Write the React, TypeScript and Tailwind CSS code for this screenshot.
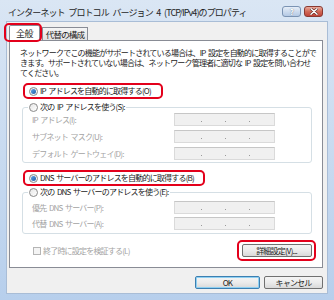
const FONT = "font-['Noto_Sans_CJK_JP','Noto_Sans',sans-serif]";

function Radio({ checked }: { checked?: boolean }) {
  return (
    <span className="w-[9px] h-[9px] shrink-0 rounded-full border border-[#8a8a8a] bg-gradient-to-br from-[#e6e6e6] to-[#ffffff] flex items-center justify-center">
      {checked && <span className="w-[5px] h-[5px] rounded-full bg-gradient-to-br from-[#5fa3e6] to-[#1f5ea8]" />}
    </span>
  );
}

function IpBox() {
  return (
    <div className="w-[101px] h-[13px] bg-[#f0f0f0] border border-[#dadada] border-t-[#c6c6c6] flex items-end pb-[3px] pl-[26px] gap-[23px]">
      <span className="w-px h-px bg-[#9a9a9a]" />
      <span className="w-px h-px bg-[#9a9a9a]" />
      <span className="w-px h-px bg-[#9a9a9a]" />
    </div>
  );
}

function Row({ label }: { label: string }) {
  return (
    <div className="flex items-center h-[13px]">
      <span className="w-[151px] pl-[9px] text-[#a3a3a3] whitespace-nowrap">{label}</span>
      <IpBox />
    </div>
  );
}

function Button({ children, primary, w }: { children: React.ReactNode; primary?: boolean; w: string }) {
  return (
    <div
      className={`${w} h-[13px] rounded-[2px] border flex items-center justify-center bg-gradient-to-b from-[#f4f4f4] via-[#ebebeb] to-[#d9d9d9] ${
        primary ? 'border-[#3c7fb1] shadow-[inset_0_0_0_1px_#8fd0f2]' : 'border-[#707070]'
      }`}
    >
      {children}
    </div>
  );
}

export default function App() {
  return (
    <div className={`w-[334px] h-[300px] overflow-hidden flex flex-col bg-gradient-to-b from-[#dae6f4] to-[#b7cfec] ${FONT} text-[8px] tracking-[-0.8px] [word-spacing:1.5px] text-[#1b1b1b]`}>
      {/* title bar */}
      <div className="h-[21px] shrink-0 flex items-center pl-[8px] pr-[11px] pt-[4px]">
        <span className="flex-1 text-[9px] tracking-[-0.9px] [word-spacing:2.5px] text-[#1e1e1e] whitespace-nowrap">
          インターネット プロトコル バージョン 4 (TCP/IPv4)のプロパティ
        </span>
        <div className="flex gap-[3px] -mt-[2px]">
          <div className="w-[19px] h-[11px] rounded-[3px] border border-[#7b93b3] bg-gradient-to-b from-[#e6eef8] to-[#b4c9e4] flex items-center justify-center text-[8px] font-bold text-white [text-shadow:0_0_1px_#44556a]">
            ?
          </div>
          <div className="w-[19px] h-[11px] rounded-[3px] border border-[#8a3a32] bg-gradient-to-b from-[#e9a99c] via-[#d16a58] to-[#c0443a] flex items-center justify-center">
            <svg width="8" height="7" viewBox="0 0 8 7">
              <path d="M1 0.8 L7 6.2 M7 0.8 L1 6.2" stroke="#5a2520" strokeWidth="2.6" strokeLinecap="round" />
              <path d="M1 0.8 L7 6.2 M7 0.8 L1 6.2" stroke="#ffffff" strokeWidth="1.5" strokeLinecap="round" />
            </svg>
          </div>
        </div>
      </div>

      {/* client */}
      <div className="mx-[6px] mb-[6px] h-[273px] bg-[#f0f0f0] border border-[#a9bdd6] flex flex-col pt-[3px] pl-[2px] pr-[4px]">
        {/* tabs */}
        <div className="flex items-end h-[15px] relative z-10">
          <div className="relative">
            <div className="w-[31px] h-[16px] -mb-px bg-white border border-b-0 border-[#898c95] rounded-t-[2px] flex items-center justify-center text-[9px] tracking-[-0.5px]">
              全般
            </div>
            <span className="absolute -left-[5px] -right-[2px] -top-[2px] -bottom-[2px] border-[2px] border-[#e3001b] rounded-[5px]" />
          </div>
          <div className="ml-[2px] w-[46px] h-[13px] bg-gradient-to-b from-[#f5f5f5] to-[#e2e2e2] border border-b-0 border-[#898c95] flex items-center justify-center text-[8.5px]">
            代替の構成
          </div>
        </div>

        {/* panel */}
        <div className="h-[228px] bg-white border border-[#898c95] flex flex-col">
          <p className="mt-[7px] ml-[10px] leading-[10px] whitespace-nowrap">
            ネットワークでこの機能がサポートされている場合は、IP 設定を自動的に取得することがで
            <br />
            きます。サポートされていない場合は、ネットワーク管理者に適切な IP 設定を問い合わせ
            <br />
            てください。
          </p>

          <div className="mt-[5px] ml-[13px] w-[140px] h-[16px] border-[2px] border-[#e3001b] rounded-[5px] flex items-center pl-[4px] gap-[2px] whitespace-nowrap">
            <Radio checked />
            <span>IP アドレスを自動的に取得する(O)</span>
          </div>

          <fieldset className="mt-[2px] ml-[12px] w-[290px] border border-[#d5dfe5] rounded-[3px] pb-[2px]">
            <legend className="ml-[5px] px-[1px] h-[12px] flex items-center gap-[2px] whitespace-nowrap">
              <Radio />
              <span>次の IP アドレスを使う(S):</span>
            </legend>
            <div className="flex flex-col gap-[4px]">
              <Row label="IP アドレス(I):" />
              <Row label="サブネット マスク(U):" />
              <Row label="デフォルト ゲートウェイ(D):" />
            </div>
          </fieldset>

          <div className="mt-[7px] ml-[13px] w-[182px] h-[16px] border-[2px] border-[#e3001b] rounded-[5px] flex items-center pl-[4px] gap-[2px] whitespace-nowrap">
            <Radio checked />
            <span>DNS サーバーのアドレスを自動的に取得する(B)</span>
          </div>

          <fieldset className="ml-[12px] w-[290px] border border-[#d5dfe5] rounded-[3px] pt-[3px] pb-[3px]">
            <legend className="ml-[5px] px-[1px] h-[12px] flex items-center gap-[2px] whitespace-nowrap">
              <Radio />
              <span>次の DNS サーバーのアドレスを使う(E):</span>
            </legend>
            <div className="flex flex-col gap-[3px]">
              <Row label="優先 DNS サーバー(P):" />
              <Row label="代替 DNS サーバー(A):" />
            </div>
          </fieldset>

          <div className="mt-[6px] flex items-center justify-between pr-[6px]">
            <div className="ml-[23px] flex items-center gap-[2px] text-[#a3a3a3] whitespace-nowrap">
              <span className="w-[8px] h-[8px] border border-[#b5b5b5] bg-[#f4f4f4]" />
              <span>終了時に設定を検証する(L)</span>
            </div>
            <div className="border-[2px] border-[#e3001b] rounded-[5px] p-[2px] px-[2.5px]">
              <Button w="w-[70px]">詳細設定(V)...</Button>
            </div>
          </div>
        </div>

        {/* dialog buttons */}
        <div className="mt-[8px] flex justify-end gap-[4px]">
          <Button w="w-[65px]" primary>
            OK
          </Button>
          <Button w="w-[59px]">キャンセル</Button>
        </div>
      </div>
    </div>
  );
}
